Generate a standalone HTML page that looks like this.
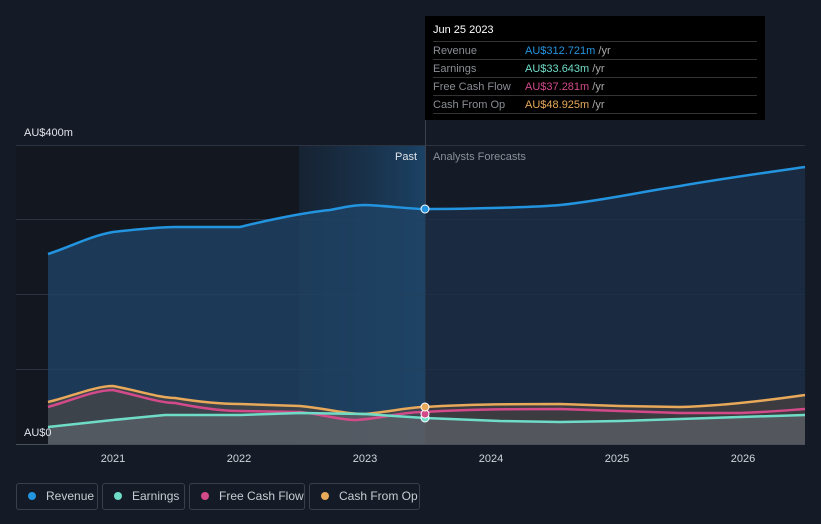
<!DOCTYPE html>
<html><head><style>
body{margin:0;background:#151b26;width:821px;height:524px;overflow:hidden;font-family:"Liberation Sans",sans-serif}
.leg{position:absolute;top:483px;height:27px;border:1px solid #3a404b;border-radius:3px;box-sizing:border-box;color:#c8ccd2;font-size:12px;line-height:25px}
.leg i{display:inline-block;width:8px;height:8px;border-radius:50%;margin:0 10px 0 11px;vertical-align:0}
.tt td{padding:0;height:17px;border-top:1px solid #333;font-size:11px}
</style></head><body>
<svg width="821" height="524" style="position:absolute;left:0;top:0">
<defs><linearGradient id="hl" x1="0" x2="1"><stop offset="0" stop-color="#1a3550" stop-opacity=".3"/><stop offset="1" stop-color="#1b4265"/></linearGradient>
<clipPath id="past"><rect x="0" y="0" width="425" height="524"/></clipPath>
<clipPath id="fut"><rect x="425" y="0" width="400" height="524"/></clipPath></defs>
<rect x="16" y="145" width="283" height="299" fill="#121720"/>
<rect x="299" y="145" width="126" height="299" fill="url(#hl)"/>
<g stroke="#2b3340" stroke-width="1"><line x1="16" x2="805" y1="145.5" y2="145.5"/><line x1="16" x2="805" y1="219.5" y2="219.5"/><line x1="16" x2="805" y1="294.5" y2="294.5"/><line x1="16" x2="805" y1="369.5" y2="369.5"/></g>
<line x1="16" x2="805" y1="444.5" y2="444.5" stroke="#4a505a"/>
<line x1="425.5" x2="425.5" y1="120" y2="444" stroke="#3a4250"/>
<g id="rev"><path clip-path="url(#past)" d="M48,254 C70,247 90,236 113,232 C140,229 160,227 175,227 L240,227 C260,222 300,213 330,210 C345,207 355,205 365,205 C390,206 410,209 425,209 C470,209 540,207 560,205 C600,201 640,192 680,186 C720,179 770,172 805,167 L805,444 L48,444Z" fill="#1f4465" fill-opacity=".8"/>
<path clip-path="url(#fut)" d="M48,254 C70,247 90,236 113,232 C140,229 160,227 175,227 L240,227 C260,222 300,213 330,210 C345,207 355,205 365,205 C390,206 410,209 425,209 C470,209 540,207 560,205 C600,201 640,192 680,186 C720,179 770,172 805,167 L805,444 L48,444Z" fill="#1c3048" fill-opacity=".8"/></g>
<path d="M48,402 C70,397 95,386 113,386 C140,391 160,398 175,398 C200,402 220,404 240,404 L300,406 C330,409 345,414 365,414 C395,411 410,407 425,407 C470,404 530,404 560,404 L620,406 L680,407 C720,406 770,400 805,395 L805,444 L48,444Z" fill="#5a4a40" fill-opacity=".55"/>
<path d="M48,427 L113,420 L165,415 L240,415 L300,413 L365,414 L425,418 L500,421 L560,422 L620,421 L680,419 L740,417 L805,415 L805,444 L48,444Z" fill="#6a7078" fill-opacity=".5"/>
<g fill="none" stroke-width="2.5">
<path d="M48,254 C70,247 90,236 113,232 C140,229 160,227 175,227 L240,227 C260,222 300,213 330,210 C345,207 355,205 365,205 C390,206 410,209 425,209 C470,209 540,207 560,205 C600,201 640,192 680,186 C720,179 770,172 805,167" stroke="#2394df"/>
<path d="M48,402 C70,397 95,386 113,386 C140,391 160,398 175,398 C200,402 220,404 240,404 L300,406 C330,409 345,414 365,414 C395,411 410,407 425,407 C470,404 530,404 560,404 L620,406 L680,407 C720,406 770,400 805,395" stroke="#e8a95a"/>
<path d="M48,407 C70,401 95,390 113,390 C140,396 160,403 175,403 C200,408 220,411 240,411 L300,412 C320,414 340,420 355,420 C380,419 400,412 425,412 C470,409 530,409 560,409 L620,411 L680,413 L740,413 C770,412 790,410 805,409" stroke="#d34a8a"/>
<path d="M48,427 L113,420 L165,415 L240,415 L300,413 L365,414 L425,418 L500,421 L560,422 L620,421 L680,419 L740,417 L805,415" stroke="#6fdcc8"/>
</g>
<circle cx="425" cy="209" r="4" fill="#2394df" stroke="#fff" stroke-width="1"/>
<circle cx="425" cy="418" r="4" fill="#6fdcc8" stroke="#fff" stroke-width="1"/>
<circle cx="425" cy="414" r="4" fill="#d34a8a" stroke="#fff" stroke-width="1"/>
<circle cx="425" cy="407" r="4" fill="#e8a95a" stroke="#fff" stroke-width="1"/>
<g font-size="11" fill="#d0d4da" text-anchor="middle"><text x="113" y="462">2021</text><text x="239" y="462">2022</text><text x="365" y="462">2023</text><text x="491" y="462">2024</text><text x="617" y="462">2025</text><text x="743" y="462">2026</text></g>
<text x="24" y="136" font-size="11" fill="#e0e3e8">AU$400m</text>
<text x="24" y="436" font-size="11" fill="#e0e3e8">AU$0</text>
<text x="417" y="160" font-size="11" fill="#e0e3e8" text-anchor="end">Past</text>
<text x="433" y="160" font-size="11" fill="#8a9099">Analysts Forecasts</text>
</svg>
<div style="position:absolute;left:425px;top:16px;width:340px;height:104px;background:#000;box-sizing:border-box;padding:8px 8px">
<div style="color:#fff;font-size:11px;height:17px">Jun 25 2023</div>
<table class="tt" style="border-collapse:collapse;width:100%;border-bottom:1px solid #333">
<tr><td style="color:#8a8e94;width:92px">Revenue</td><td><span style="color:#2394df">AU$312.721m</span> <span style="color:#aaa">/yr</span></td></tr>
<tr><td style="color:#8a8e94">Earnings</td><td><span style="color:#6fdcc8">AU$33.643m</span> <span style="color:#aaa">/yr</span></td></tr>
<tr><td style="color:#8a8e94">Free Cash Flow</td><td><span style="color:#d34a8a">AU$37.281m</span> <span style="color:#aaa">/yr</span></td></tr>
<tr><td style="color:#8a8e94">Cash From Op</td><td><span style="color:#e8a95a">AU$48.925m</span> <span style="color:#aaa">/yr</span></td></tr>
</table></div>
<div class="leg" style="left:16px;width:82px"><i style="background:#2394df"></i>Revenue</div>
<div class="leg" style="left:102px;width:83px"><i style="background:#6fdcc8"></i>Earnings</div>
<div class="leg" style="left:189px;width:116px"><i style="background:#d34a8a"></i>Free Cash Flow</div>
<div class="leg" style="left:309px;width:111px"><i style="background:#e8a95a"></i>Cash From Op</div>
</body></html>
